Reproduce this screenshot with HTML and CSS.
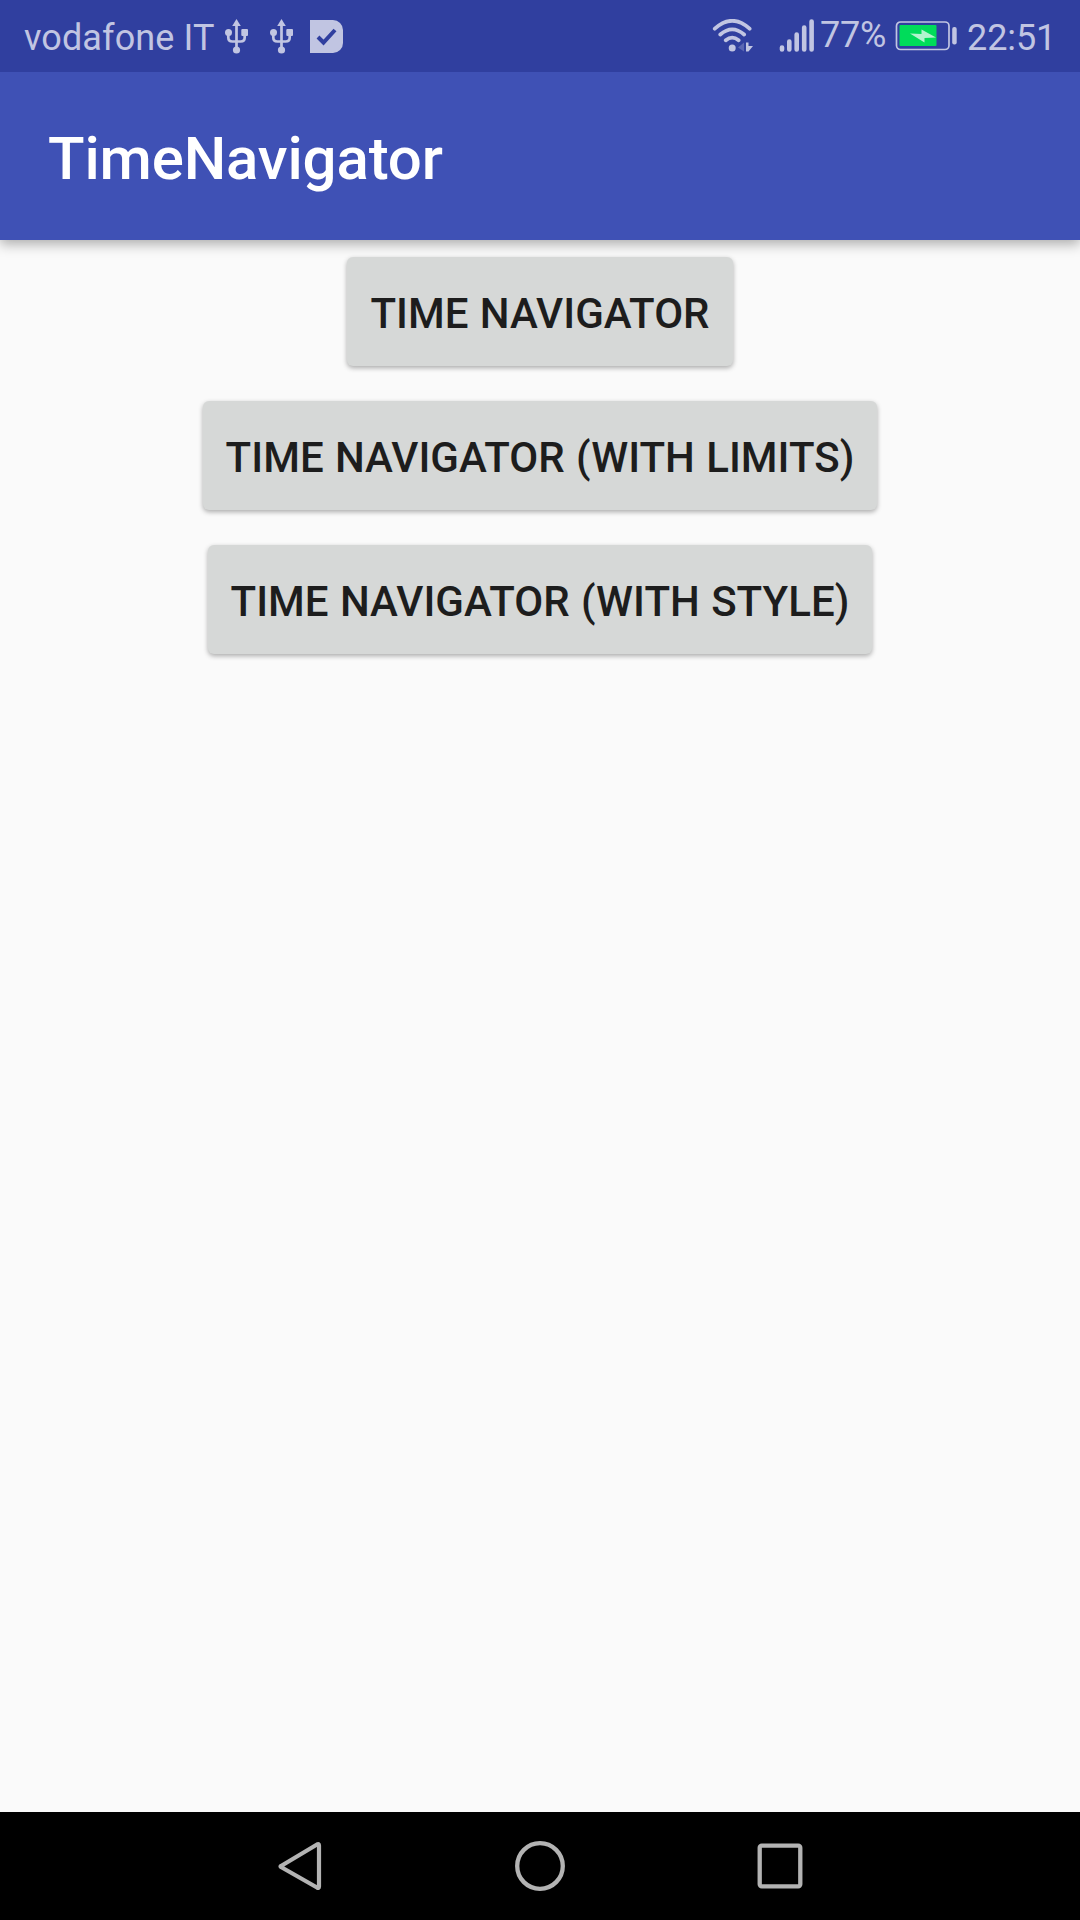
FILE: index.html
```html
<!DOCTYPE html>
<html lang="en">
<head>
<meta charset="utf-8">
<title>TimeNavigator</title>
<link rel="stylesheet" href="styles.css">
</head>
<body>
<div class="screen">
  <header class="status-bar">
    <span class="carrier">vodafone IT</span>
    <svg class="usb" width="24" height="36" viewBox="0 0 24 36"><use href="#usb-shape"/>
      <defs><g id="usb-shape">
        <path d="M11.500 5v25M3.300 13v5.500q0 4 4 4h8.400q4 0 4-4V13" fill="none" stroke="currentColor" stroke-width="2.700"/>
        <path d="M11.500 0l4.300 7H7.200z" fill="currentColor"/>
        <circle cx="3.500" cy="13.500" r="3.500" fill="currentColor"/>
        <rect x="16.300" y="10" width="6.700" height="7" rx="1" fill="currentColor"/>
        <circle cx="11.500" cy="31" r="3.600" fill="currentColor"/>
      </g></defs>
    </svg>
    <svg class="usb second" width="24" height="36" viewBox="0 0 24 36"><use href="#usb-shape"/></svg>
    <svg class="check" width="33" height="33" viewBox="0 0 33 33">
      <path d="M0 0h23a10 10 0 0 1 10 10v13a10 10 0 0 1-10 10H0z" fill="currentColor"/>
      <path d="M8 17l5.500 5.500L25 10" fill="none" stroke="#303f9f" stroke-width="4"/>
    </svg>
    <div class="spacer"></div>
    <svg class="wifi" width="42" height="34" viewBox="0 0 42 34">
      <g fill="none" stroke="currentColor" stroke-width="3.800" stroke-linecap="round">
        <path d="M2.800 9.700Q20.200-6 37.600 9.700M8.300 15.500Q20.200 5.300 32.100 15.500M13.800 21.300Q20.200 16 26.600 21.300"/>
      </g>
      <circle cx="20.200" cy="28.900" r="3.500" fill="currentColor"/>
      <path d="M26 28.500l6-5v9z" fill="currentColor" opacity=".3"/>
      <path d="M34 23.500h2.500V27h4.500L36.500 32.500H34z" fill="currentColor"/>
    </svg>
    <svg class="signal" width="36" height="34" viewBox="0 0 36 34">
      <path d="M3 28.500v2M10.300 22.500v8M17.700 15.500v15M25.200 8.500v22M32.600 2.500v28" fill="none" stroke="currentColor" stroke-width="4.600" stroke-linecap="round"/>
    </svg>
    <span class="percent">77%</span>
    <svg class="battery" width="62" height="30" viewBox="0 0 62 30">
      <rect x="1.500" y="1" width="52.500" height="27.500" rx="4" fill="none" stroke="currentColor" stroke-width="1.700"/>
      <rect x="4.500" y="4" width="37" height="21" rx="1" fill="#00dc5a"/>
      <path d="M15 12.500L26.500 13V8.500l14.500 8L29.500 17v4.500z" fill="#b2f4ce"/>
      <rect x="57.200" y="6" width="4.500" height="17.500" rx="2" fill="currentColor"/>
    </svg>
    <time class="clock">22:51</time>
  </header>
  <div class="app-bar"><h1 class="title">TimeNavigator</h1></div>
  <main class="content">
    <button class="action">TIME NAVIGATOR</button>
    <button class="action">TIME NAVIGATOR (WITH LIMITS)</button>
    <button class="action">TIME NAVIGATOR (WITH STYLE)</button>
  </main>
  <nav class="nav-bar">
    <svg width="240" height="108" viewBox="180 0 240 108"><path d="M281 54l36-21.500q2-1 2 1v41q0 2-2 1L281 55q-1-.5 0-1z" fill="none" stroke="#b3b3b3" stroke-width="4.200" stroke-linejoin="round"/></svg>
    <svg width="240" height="108" viewBox="420 0 240 108"><circle cx="540" cy="54" r="22.800" fill="none" stroke="#b3b3b3" stroke-width="4.300"/></svg>
    <svg width="240" height="108" viewBox="660 0 240 108"><rect x="759.700" y="33.700" width="40.600" height="40.600" rx="2" fill="none" stroke="#b3b3b3" stroke-width="4.300"/></svg>
  </nav>
</div>
</body>
</html>
```
FILE: styles.css
```css
* { box-sizing: border-box; }
body { margin: 0; }
.screen {
  width: 1080px;
  height: 1920px;
  display: flex;
  flex-direction: column;
  background: #fafafa;
  font-family: Roboto, sans-serif;
}
svg { display: block; flex: none; }
.status-bar {
  position: relative;
  z-index: 1;
  height: 72px;
  flex: none;
  display: flex;
  align-items: flex-start;
  padding: 0 26px 0 24px;
  background: #303f9f;
  color: #c1c5e2;
  font-size: 36px;
  line-height: 42px;
}
.carrier { width: 190px; margin: 17px 11px 0 0; white-space: nowrap; letter-spacing: .12px; }
.usb { margin-top: 19px; }
.second { margin-left: 21px; }
.check { margin: 20px 0 0 16px; }
.spacer { flex: 1; }
.wifi { margin: 19px 25px 0 0; }
.signal { margin: 19px 5px 0 0; }
.percent { width: 66px; margin: 14px 9px 0 0; letter-spacing: -.2px; }
.battery { margin: 21px 10px 0 0; }
.clock { width: 87px; margin-top: 17px; letter-spacing: -.1px; }
.app-bar {
  height: 168px;
  flex: none;
  display: flex;
  align-items: center;
  padding: 6px 48px 0;
  background: #3f51b5;
  box-shadow: 0 4px 12px rgba(0, 0, 0, .32);
}
.title { margin: 0; color: #fff; font-size: 60px; font-weight: 500; line-height: 70px; letter-spacing: -.15px; }
.content {
  flex: 1;
  display: flex;
  flex-direction: column;
  align-items: center;
  gap: 35px;
  padding-top: 17px;
}
.action {
  height: 109px;
  border: 0;
  border-radius: 6px;
  padding: 3px 23px 0;
  background: #d6d8d7;
  color: #1d1d1d;
  font: 500 42px/49px Roboto, sans-serif;
  letter-spacing: .03px;
  word-spacing: .8px;
  box-shadow: 0 2px 5px rgba(0, 0, 0, .32);
}
.nav-bar {
  height: 108px;
  flex: none;
  display: flex;
  justify-content: center;
  background: #000;
}
```
